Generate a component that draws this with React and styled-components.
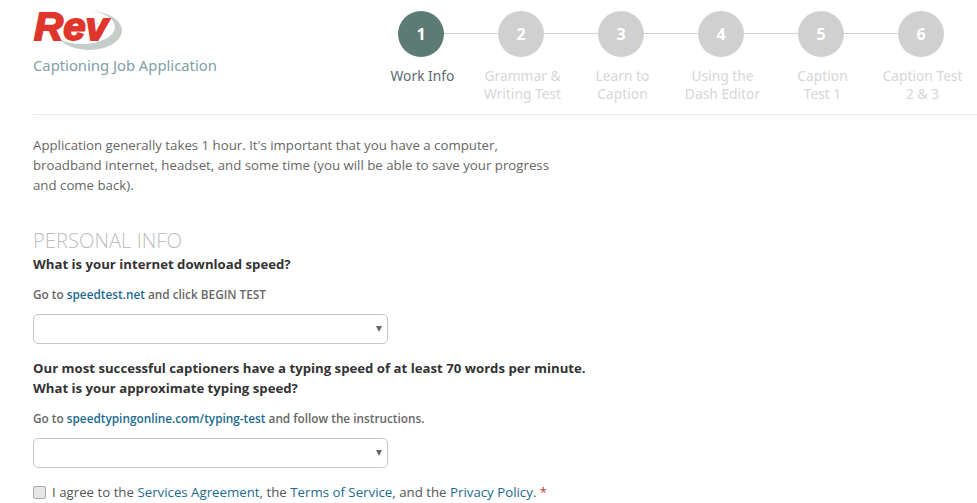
import React from 'react';
import styled, { createGlobalStyle } from 'styled-components';

const Global = createGlobalStyle`
  html, body {
    margin: 0;
    padding: 0;
    background: #fff;
    overflow: hidden;
  }
  body {
    font-family: "Open Sans", "Liberation Sans", sans-serif;
    color: #555;
  }
`;

const Page = styled.div`
  width: 977px;
  height: 503px;
  overflow: hidden;
  box-sizing: border-box;
  padding-left: 33px;
`;

const Header = styled.header`
  display: flex;
  justify-content: space-between;
  height: 115px;
  box-sizing: border-box;
  border-bottom: 1px solid #e9e9e9;
  padding-right: 6px;
`;

const Brand = styled.div`
  padding-top: 11px;
`;

const Tagline = styled.div`
  font-family: "Noto Sans", sans-serif;
  font-size: 14.8px;
  line-height: 20px;
  margin-top: 4px;
  color: #7fa0a8;
`;

const Steps = styled.ol`
  display: flex;
  list-style: none;
  margin: 0;
  padding: 11px 0 0;
`;

const Step = styled.li`
  position: relative;
  width: 100px;
  display: flex;
  flex-direction: column;
  align-items: center;
  &:not(:last-child)::after {
    content: '';
    position: absolute;
    top: 22px;
    left: 50%;
    width: 100px;
    height: 1px;
    background: #cfcfcf;
  }
`;

const Bubble = styled.div`
  position: relative;
  z-index: 1;
  width: 46px;
  height: 46px;
  border-radius: 50%;
  display: flex;
  align-items: center;
  justify-content: center;
  font-family: "Noto Sans", sans-serif;
  font-weight: 700;
  font-size: 16px;
  color: #fff;
  background: ${p => (p.$active ? '#5c7b74' : '#d0d0d0')};
`;

const StepLabel = styled.div`
  font-family: "Noto Sans", sans-serif;
  font-size: 13.8px;
  line-height: 18px;
  margin-top: 10px;
  padding-left: 3px;
  text-align: center;
  white-space: pre-line;
  color: ${p => (p.$active ? '#5a6a72' : '#d6d6d6')};
`;

const Content = styled.main`
  width: 600px;
`;

const Intro = styled.p`
  margin: 20px 0 0;
  width: 530px;
  font-size: 13.25px;
  line-height: 20px;
  color: #666;
`;

const SectionTitle = styled.h2`
  margin: 32px 0 0;
  font-size: 20.2px;
  line-height: 27px;
  font-weight: 300;
  color: #bdbdbd;
`;

const Question = styled.div`
  font-size: 13.2px;
  line-height: 20px;
  font-weight: 700;
  color: #333;
  white-space: nowrap;
  margin-top: ${p => p.$top || 0}px;
`;

const Hint = styled.div`
  font-size: 11.8px;
  line-height: 16px;
  font-weight: 600;
  color: #666;
  margin-top: 12px;
`;

const Link = styled.a`
  color: #1a6a8f;
`;

const SelectBox = styled.div`
  position: relative;
  width: 355px;
  height: 30px;
  box-sizing: border-box;
  margin-top: 12px;
  border: 1px solid #c6c6c6;
  border-radius: 5px;
  background: #fff;
  &::after {
    content: '';
    position: absolute;
    right: 5px;
    top: 11px;
    border-left: 3px solid transparent;
    border-right: 3px solid transparent;
    border-top: 6px solid #666;
  }
`;

const Agree = styled.label`
  display: flex;
  align-items: center;
  gap: 6px;
  margin-top: 14px;
  font-size: 13.27px;
  line-height: 20px;
  color: #555;
  white-space: nowrap;
`;

const Check = styled.span`
  width: 11px;
  height: 11px;
  border: 1px solid #aaa;
  border-radius: 2px;
  background: #e6e6e6;
`;

const Star = styled.span`
  color: #c0392b;
`;

const Logo = () => (
  <svg width="100" height="40" viewBox="0 0 100 40" style={{ display: 'block' }}>
    <ellipse cx="56" cy="19.5" rx="33" ry="19.5" fill="#c6cec9" />
    <ellipse cx="49" cy="16" rx="33" ry="17" fill="#fff" />
    <text x="1" y="29" fontFamily="Liberation Sans" fontWeight="700" fontStyle="italic" fontSize="38" fill="#e0352b" stroke="#e0352b" strokeWidth="1.8" textLength="74" lengthAdjust="spacingAndGlyphs">Rev</text>
  </svg>
);

const stepItems = [
  'Work Info',
  'Grammar &\nWriting Test',
  'Learn to\nCaption',
  'Using the\nDash Editor',
  'Caption\nTest 1',
  'Caption Test\n2 & 3',
];

export default function App() {
  return (
    <Page>
      <Global />
      <Header>
        <Brand>
          <Logo />
          <Tagline>Captioning Job Application</Tagline>
        </Brand>
        <Steps>
          {stepItems.map((label, i) => (
            <Step key={label}>
              <Bubble $active={i === 0}>{i + 1}</Bubble>
              <StepLabel $active={i === 0}>{label}</StepLabel>
            </Step>
          ))}
        </Steps>
      </Header>
      <Content>
        <Intro>
          Application generally takes 1 hour. It's important that you have a computer, broadband internet, headset, and some time (you will be able to save your progress and come back).
        </Intro>
        <SectionTitle>PERSONAL INFO</SectionTitle>
        <Question>What is your internet download speed?</Question>
        <Hint>Go to <Link>speedtest.net</Link> and click BEGIN TEST</Hint>
        <SelectBox />
        <Question $top={14}>
          Our most successful captioners have a typing speed of at least 70 words per minute.<br />
          What is your approximate typing speed?
        </Question>
        <Hint>Go to <Link>speedtypingonline.com/typing-test</Link> and follow the instructions.</Hint>
        <SelectBox />
        <Agree>
          <Check />
          <span>I agree to the <Link>Services Agreement</Link>, the <Link>Terms of Service</Link>, and the <Link>Privacy Policy</Link>. <Star>*</Star></span>
        </Agree>
      </Content>
    </Page>
  );
}
